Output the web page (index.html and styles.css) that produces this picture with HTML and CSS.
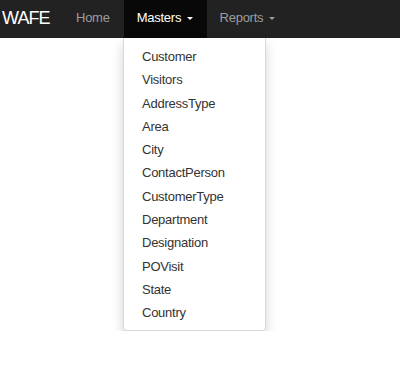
FILE: index.html
```html
<!DOCTYPE html>
<html lang="en">
<head>
    <meta charset="UTF-8">
    <title>WAFE</title>
    <link rel="stylesheet" href="styles.css">
</head>
<body>

<div class="navbar">
    <a class="brand" href="#">WAFE</a>
    <ul class="nav">
        <li><a href="#">Home</a></li>
        <li><a class="active" href="#">Masters <span class="caret"></span></a></li>
        <li><a href="#">Reports <span class="caret"></span></a></li>
    </ul>
</div>

<div class="menu-row">
    <ul class="masters-menu">
        <li><a href="#">Customer</a></li>
        <li><a href="#">Visitors</a></li>
        <li><a href="#">AddressType</a></li>
        <li><a href="#">Area</a></li>
        <li><a href="#">City</a></li>
        <li><a href="#">ContactPerson</a></li>
        <li><a href="#">CustomerType</a></li>
        <li><a href="#">Department</a></li>
        <li><a href="#">Designation</a></li>
        <li><a href="#">POVisit</a></li>
        <li><a href="#">State</a></li>
        <li><a href="#">Country</a></li>
    </ul>
</div>

</body>
</html>
```

FILE: styles.css
```css
* {
    box-sizing: border-box;
}

body, html {
    margin: 0;
    background: white;
    font-family: "Liberation Sans", Arial, sans-serif;
    font-size: 13px;
    letter-spacing: -0.25px;
}

a {
    text-decoration: none;
}

.navbar {
    background-color: #222;
    height: 38px;
    display: flex;
    align-items: flex-start;
}

.brand {
    width: 63px;
    color: #fff;
    font-size: 18px;
    letter-spacing: -0.9px;
    line-height: 20px;
    padding: 8px 0 10px 2px;
}

.nav {
    list-style: none;
    margin: 0;
    padding: 0;
    display: flex;
}

.nav > li > a {
    display: block;
    color: #9d9d9d;
    line-height: 18px;
    padding: 9px 14px 11px 13px;
    height: 38px;
}

.nav > li > a.active {
    background-color: #080808;
    color: #fff;
}

.caret {
    display: inline-block;
    width: 0;
    height: 0;
    margin-left: 2px;
    vertical-align: middle;
    border-top: 3px solid;
    border-left: 3px solid transparent;
    border-right: 3px solid transparent;
}

.menu-row {
    display: flex;
    padding-left: 123px;
}

.masters-menu {
    width: 143px;
    margin: 0;
    padding: 7px 0 5px;
    list-style: none;
    background-color: #fff;
    border: 1px solid rgba(0, 0, 0, .15);
    border-top: 0;
    border-radius: 0 0 4px 4px;
    box-shadow: 0 6px 12px rgba(0, 0, 0, .175);
}

.masters-menu a {
    display: block;
    color: #333;
    padding: 3px 18px;
    line-height: 17.3px;
    white-space: nowrap;
}
```
